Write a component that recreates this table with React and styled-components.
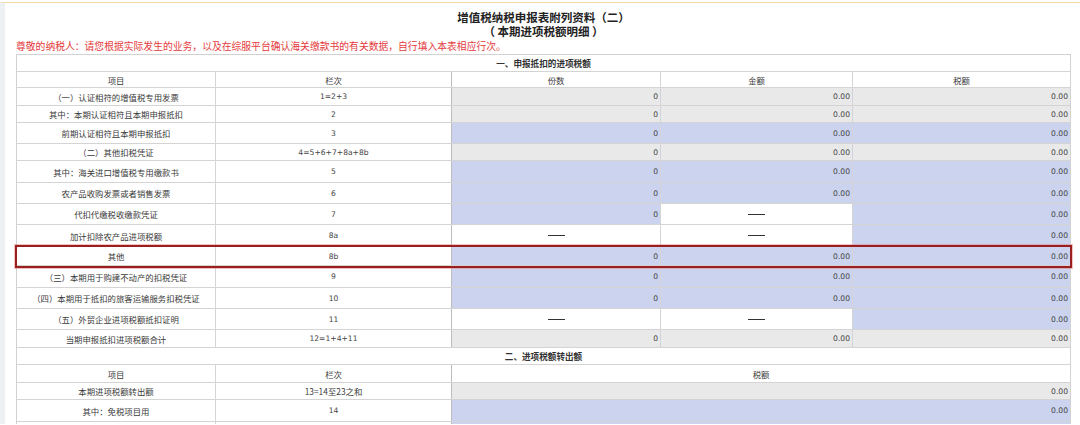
import React from "react";
import styled, { createGlobalStyle } from "styled-components";

const GlobalStyle = createGlobalStyle`
  html, body {
    margin: 0;
    padding: 0;
    background: #ffffff;
  }
  body {
    font-family: "Liberation Sans", "Noto Sans CJK SC", sans-serif;
    color: #333;
  }
`;

const tones = {
  white: "#ffffff",
  gray: "#e9e9e9",
  blue: "#cbd3ee",
};

const Page = styled.div`
  margin-top: 2px;
  border-top: 1px solid #f1d8a3;
  width: 1080px;
  height: 422px;
  overflow: hidden;
  box-sizing: border-box;
  border-left: 5px solid #eef1f4;
  padding-left: 11px;
`;

const Heading = styled.div`
  width: 1055px;
  text-align: center;
  font-family: "Noto Sans CJK SC", sans-serif;
  font-weight: 700;
  font-size: 11.5px;
  line-height: 14px;
  color: #222;
  padding-top: 7px;
`;

const Notice = styled.div`
  font-family: "Noto Sans CJK SC", sans-serif;
  font-size: 9.8px;
  line-height: 16px;
  color: #e5393c;
  white-space: nowrap;
`;

const Table = styled.div`
  width: 1055px;
  border-left: 1px solid #d2d2d2;
  border-right: 1px solid #d2d2d2;
  border-top: 1px solid #d2d2d2;
  box-sizing: border-box;
  font-size: 8.4px;
  color: #3a3a3a;
`;

const Row = styled.div`
  display: grid;
  grid-template-columns: ${({ $wide }) =>
    $wide ? "199px 236px 1fr" : "199px 236px 209px 192px 1fr"};
  height: ${({ $h }) => $h}px;
  box-sizing: border-box;
  border-bottom: 1px solid #d4d4d4;
  position: relative;
  ${({ $marked }) =>
    $marked &&
    `
    z-index: 2;
    outline: 2px solid #9c1f1f;
    box-shadow: 0 0 0 3px rgba(226, 120, 120, 0.45);
  `}
`;

const SectionRow = styled.div`
  height: ${({ $h }) => $h}px;
  box-sizing: border-box;
  border-bottom: 1px solid #d4d4d4;
  display: flex;
  align-items: center;
  justify-content: center;
  font-family: "Noto Sans CJK SC", sans-serif;
  font-weight: 700;
  font-size: 8.6px;
  color: #333;
  background: #fff;
`;

const Cell = styled.div`
  display: flex;
  align-items: center;
  justify-content: ${({ $align }) =>
    $align === "right" ? "flex-end" : "center"};
  padding-right: ${({ $align }) => ($align === "right" ? "2px" : "0")};
  background: ${({ $tone }) => tones[$tone || "white"]};
  border-right: 1px solid
    ${({ $strong }) => ($strong ? "#bdbdbd" : "#d4d4d8")};
  font-family: "Noto Sans CJK SC", sans-serif;
  white-space: nowrap;
  overflow: hidden;
  &:last-child {
    border-right: none;
  }
`;

const Num = styled.span`
  font-family: "DejaVu Sans", "Liberation Sans", sans-serif;
  font-size: 7.6px;
  color: #444;
`;

const Dash = styled.span`
  display: block;
  width: 17px;
  height: 1px;
  background: #333;
`;

const rows = [
  { name: "（一）认证相符的增值税专用发票", no: "1=2+3", h: 18, cells: ["g0", "g00", "g00"] },
  { name: "其中：本期认证相符且本期申报抵扣", no: "2", h: 17, cells: ["g0", "g00", "g00"] },
  { name: "前期认证相符且本期申报抵扣", no: "3", h: 21, cells: ["b0", "b00", "b00"] },
  { name: "（二）其他扣税凭证", no: "4=5+6+7+8a+8b", h: 17, cells: ["g0", "g00", "g00"] },
  { name: "其中：海关进口增值税专用缴款书", no: "5", h: 22, cells: ["b0", "b00", "b00"] },
  { name: "农产品收购发票或者销售发票", no: "6", h: 21, cells: ["b0", "b00", "b00"] },
  { name: "代扣代缴税收缴款凭证", no: "7", h: 21, cells: ["b0", "w-", "b00"] },
  { name: "加计扣除农产品进项税额", no: "8a", h: 22, cells: ["w-", "w-", "b00"] },
  { name: "其他", no: "8b", h: 19, cells: ["b0", "b00", "b00"], marked: true },
  { name: "（三）本期用于购建不动产的扣税凭证", no: "9", h: 22, cells: ["b0", "b00", "b00"] },
  { name: "（四）本期用于抵扣的旅客运输服务扣税凭证", no: "10", h: 21, cells: ["b0", "b00", "b00"] },
  { name: "（五）外贸企业进项税额抵扣证明", no: "11", h: 21, cells: ["w-", "w-", "b00"] },
  { name: "当期申报抵扣进项税额合计", no: "12=1+4+11", h: 18, cells: ["g0", "g00", "g00"] },
];

// the last row only peeks in at the bottom edge, so it carries no text
const outRows = [
  { name: "本期进项税额转出额", no: "13=14至23之和", h: 17, tone: "gray", value: "0.00" },
  { name: "其中：免税项目用", no: "14", h: 22, tone: "blue", value: "0.00" },
  { name: "", no: "", h: 22, tone: "blue", value: "" },
];

function ValueCell({ code }) {
  const tone = { g: "gray", b: "blue", w: "white" }[code[0]];
  const body = code.slice(1);
  if (body === "-") {
    return (
      <Cell $tone={tone}>
        <Dash />
      </Cell>
    );
  }
  return (
    <Cell $tone={tone} $align="right">
      <Num>{body === "0" ? "0" : "0.00"}</Num>
    </Cell>
  );
}

export default function App() {
  return (
    <>
      <GlobalStyle />
      <Page>
        <Heading>
          增值税纳税申报表附列资料（二）
          <br />
          （ 本期进项税额明细 ）
        </Heading>
        <Notice>
          尊敬的纳税人：请您根据实际发生的业务，以及在综服平台确认海关缴款书的有关数据，自行填入本表相应行次。
        </Notice>
        <Table>
          <SectionRow $h={17}>一、申报抵扣的进项税额</SectionRow>
          <Row $h={16}>
            <Cell>项目</Cell>
            <Cell $strong>栏次</Cell>
            <Cell>份数</Cell>
            <Cell>金额</Cell>
            <Cell>税额</Cell>
          </Row>
          {rows.map((r) => (
            <Row key={r.no} $h={r.h} $marked={r.marked}>
              <Cell>{r.name}</Cell>
              <Cell $strong>
                <Num>{r.no}</Num>
              </Cell>
              {r.cells.map((c, i) => (
                <ValueCell key={i} code={c} />
              ))}
            </Row>
          ))}
          <SectionRow $h={17}>二、进项税额转出额</SectionRow>
          <Row $h={18} $wide>
            <Cell>项目</Cell>
            <Cell $strong>栏次</Cell>
            <Cell>税额</Cell>
          </Row>
          {outRows.map((r, i) => (
            <Row key={i} $h={r.h} $wide>
              <Cell>{r.name}</Cell>
              <Cell $strong>
                {/至/.test(r.no) ? r.no : <Num>{r.no}</Num>}
              </Cell>
              <Cell $tone={r.tone} $align="right">
                <Num>{r.value}</Num>
              </Cell>
            </Row>
          ))}
        </Table>
      </Page>
    </>
  );
}
